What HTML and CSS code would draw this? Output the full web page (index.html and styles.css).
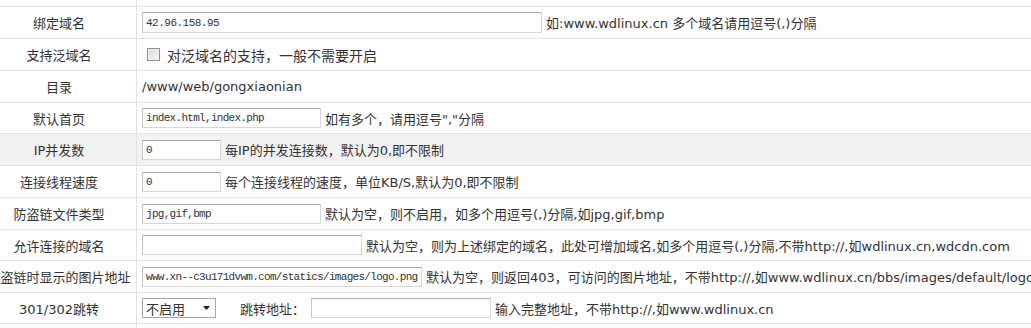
FILE: index.html
```html
<!DOCTYPE html>
<html lang="zh-CN">
<head>
<meta charset="utf-8">
<title>站点设置</title>
<link rel="stylesheet" href="styles.css">
</head>
<body>
<div class="form">
  <div class="row row-top"><div class="label"></div><div class="value"></div></div>

  <div class="row">
    <div class="label">绑定域名</div>
    <div class="value"><input class="field w-domain" type="text" value="42.96.158.95"><span class="hint">如:www.wdlinux.cn 多个域名请用逗号(,)分隔</span></div>
  </div>

  <div class="row">
    <div class="label">支持泛域名</div>
    <div class="value"><span class="check"></span><span class="check-label">对泛域名的支持，一般不需要开启</span></div>
  </div>

  <div class="row">
    <div class="label">目录</div>
    <div class="value"><span class="path">/www/web/gongxiaonian</span></div>
  </div>

  <div class="row row-short">
    <div class="label">默认首页</div>
    <div class="value"><input class="field w-mid" type="text" value="index.html,index.php"><span class="hint">如有多个，请用逗号","分隔</span></div>
  </div>

  <div class="row row-hl">
    <div class="label">IP并发数</div>
    <div class="value"><input class="field w-small" type="text" value="0"><span class="hint">每IP的并发连接数，默认为0,即不限制</span></div>
  </div>

  <div class="row">
    <div class="label">连接线程速度</div>
    <div class="value"><input class="field w-small" type="text" value="0"><span class="hint">每个连接线程的速度，单位KB/S,默认为0,即不限制</span></div>
  </div>

  <div class="row">
    <div class="label">防盗链文件类型</div>
    <div class="value"><input class="field w-mid" type="text" value="jpg,gif,bmp"><span class="hint">默认为空，则不启用，如多个用逗号(,)分隔,如jpg,gif,bmp</span></div>
  </div>

  <div class="row row-short">
    <div class="label">允许连接的域名</div>
    <div class="value"><input class="field w-allow" type="text" value=""><span class="hint">默认为空，则为上述绑定的域名，此处可增加域名,如多个用逗号(,)分隔,不带http://,如wdlinux.cn,wdcdn.com</span></div>
  </div>

  <div class="row">
    <div class="label">防盗链时显示的图片地址</div>
    <div class="value"><input class="field w-img" type="text" value="www.xn--c3u171dvwm.com/statics/images/logo.png"><span class="hint">默认为空，则返回403，可访问的图片地址，不带http://,如www.wdlinux.cn/bbs/images/default/logo.gif</span></div>
  </div>

  <div class="row row-short">
    <div class="label">301/302跳转</div>
    <div class="value">
      <div class="select"><span>不启用</span><svg class="arrow" width="7" height="4" viewBox="0 0 7 4"><path d="M0 0H7L3.5 4Z" fill="#222"/></svg></div>
      <span class="redirect-label">跳转地址：</span>
      <input class="field w-redirect" type="text" value="">
      <span class="hint">输入完整地址，不带http://,如www.wdlinux.cn</span>
    </div>
  </div>

  <div class="row row-bottom"><div class="label"></div><div class="value"></div></div>
</div>
</body>
</html>
```

FILE: styles.css
```css
* {
  box-sizing: border-box;
}

html,
body {
  margin: 0;
  padding: 0;
  background: #fff;
}

body {
  width: 1031px;
  height: 328px;
  overflow: hidden;
  font-family: "DejaVu Sans", "Noto Sans CJK SC", sans-serif;
  font-size: 13px;
  color: #333;
}

.form {
  width: 1500px;
}

.row {
  display: flex;
  height: 32px;
  border-bottom: 1px solid #e3e3e3;
}

.row-short {
  height: 31px;
}

.row-top {
  height: 7px;
}

.row-bottom {
  height: 12px;
  border-bottom: none;
}

.row-hl {
  background: #f2f2f2;
}

.label {
  flex: none;
  width: 137px;
  padding-right: 18px;
  border-right: 1px solid #e3e3e3;
  display: flex;
  align-items: center;
  justify-content: center;
  white-space: nowrap;
}

.value {
  flex: 1;
  display: flex;
  align-items: center;
  gap: 4px;
  padding-left: 5px;
  white-space: nowrap;
}

.field {
  flex: none;
  height: 20px;
  margin: 0;
  padding: 0 2px 0 3px;
  border: 1px solid #d6d6d6;
  border-top-color: #a9a9a9;
  border-left-color: #c6c6c6;
  background: #fff;
  font-family: "Liberation Mono", monospace;
  font-size: 11px;
  letter-spacing: -0.7px;
  color: #333;
  outline: none;
}

.w-domain {
  width: 400px;
  height: 21px;
  letter-spacing: -0.5px;
}

.w-mid {
  width: 179px;
}

.w-small {
  width: 79px;
}

.w-allow {
  width: 220px;
}

.w-img {
  width: 280px;
}

.w-redirect {
  width: 180px;
  margin-left: 2px;
}

.check {
  flex: none;
  width: 13px;
  height: 13px;
  margin-left: 5px;
  margin-right: 3px;
  border: 1px solid #8f8f8f;
  background: linear-gradient(135deg, #d6d6d6, #f9f9f9);
  box-shadow: inset 0 0 0 1px #efefef;
}

.check-label {
  font-size: 14px;
}

.select {
  flex: none;
  width: 74px;
  height: 20px;
  padding: 0 5px 0 3px;
  border: 1px solid #a6a6a6;
  background: #fff;
  display: flex;
  align-items: center;
  justify-content: space-between;
}

.redirect-label {
  margin-left: 20px;
}
```
